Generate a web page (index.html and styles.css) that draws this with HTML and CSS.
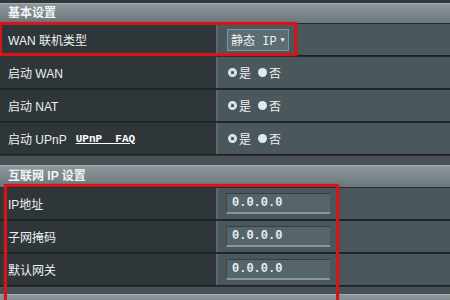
FILE: index.html
```html
<!DOCTYPE html>
<html lang="zh-CN">
<head>
  <meta charset="UTF-8">
  <title>WAN 设置</title>
  <link rel="stylesheet" href="styles.css">
</head>
<body>
  <div class="panel">
    <div class="top-strip"></div>

    <!-- 基本设置 -->
    <div class="section-head">基本设置</div>
    <div class="row">
      <div class="label">WAN 联机类型</div>
      <div class="value">
        <div class="select"><span>静态 IP</span><span class="caret">▼</span></div>
      </div>
    </div>
    <div class="row">
      <div class="label">启动 WAN</div>
      <div class="value radios">
        <span class="radio on"></span>是 <span class="radio"></span>否
      </div>
    </div>
    <div class="row">
      <div class="label">启动 NAT</div>
      <div class="value radios">
        <span class="radio on"></span>是 <span class="radio"></span>否
      </div>
    </div>
    <div class="row">
      <div class="label">启动 UPnP <a class="faq" href="#">UPnP&nbsp;&nbsp;FAQ</a></div>
      <div class="value radios">
        <span class="radio on"></span>是 <span class="radio"></span>否
      </div>
    </div>
    <div class="gap"></div>

    <!-- 互联网 IP 设置 -->
    <div class="section-head tall">互联网 IP 设置</div>
    <div class="row">
      <div class="label">IP地址</div>
      <div class="value"><div class="input">0.0.0.0</div></div>
    </div>
    <div class="row">
      <div class="label">子网掩码</div>
      <div class="value"><div class="input">0.0.0.0</div></div>
    </div>
    <div class="row">
      <div class="label">默认网关</div>
      <div class="value"><div class="input">0.0.0.0</div></div>
    </div>
    <div class="gap short"></div>
    <div class="section-head"></div>

    <!-- red annotation boxes -->
    <div class="mark mark-wan"></div>
    <div class="mark mark-ip"></div>
  </div>
</body>
</html>
```

FILE: styles.css
```css
body {
  margin: 0;
  background: #3a4144;
  font-family: "Liberation Sans", "Noto Sans CJK SC", sans-serif;
  font-size: 12px;
  color: #eef0f0;
  overflow: hidden;
}
.panel {
  position: relative;
  width: 450px;
  height: 300px;
  overflow: hidden;
}
.top-strip {
  height: 3px;
  background: #30373a;
}
.section-head {
  height: 19px;
  line-height: 19px;
  padding-left: 8px;
  background: linear-gradient(#8d989c, #6c777b);
  border-top: 1px solid #a3adb0;
  color: #f2f4f4;
  font-weight: bold;
}
.section-head.tall {
  height: 21px;
  line-height: 21px;
}
.row {
  display: grid;
  grid-template-columns: 218px 1fr;
  height: 31px;
  border-top: 1px solid #252b2d;
  border-bottom: 1px solid #1c2123;
}
.label {
  background: #2e3639;
  border-right: 2px solid #5d686c;
  padding-left: 8px;
  display: flex;
  align-items: center;
  gap: 9px;
}
.value {
  background: #4a575c;
  display: flex;
  align-items: center;
  padding-left: 8px;
}
.faq {
  color: #ffffff;
  font-family: "Liberation Mono", "DejaVu Sans Mono", monospace;
  font-weight: bold;
  font-size: 11px;
  text-decoration: underline;
}
.select {
  display: flex;
  align-items: center;
  gap: 4px;
  width: 62px;
  height: 22px;
  box-sizing: border-box;
  margin-left: 1px;
  background: #5c6c73;
  border: 1px solid #7f95a0;
  font-family: "Liberation Mono", "Noto Sans CJK SC", monospace;
  font-size: 12px;
  padding-left: 3px;
  white-space: nowrap;
}
.caret {
  font-size: 7px;
}
.radios {
  font-size: 12px;
}
.radio {
  display: inline-block;
  width: 9px;
  height: 9px;
  margin: 0 2px 0 7px;
  border-radius: 50%;
  background: #e4e8e8;
  box-sizing: border-box;
}
.radio.on {
  margin-left: 2px;
  border: 2px solid #e4e8e8;
  background: #3a4447;
  box-shadow: inset 0 0 0 1px #e4e8e8;
}
.input {
  width: 104px;
  height: 21px;
  box-sizing: border-box;
  background: #56656a;
  border-top: 1px solid #34403f;
  border-left: 1px solid #3c4749;
  border-bottom: 2px solid #8797a0;
  font-family: "Liberation Mono", "DejaVu Sans Mono", monospace;
  font-size: 12px;
  font-weight: bold;
  line-height: 18px;
  padding-left: 5px;
  color: #e8eef0;
}
.gap {
  height: 9px;
  background: #4a5154;
  border-top: 1px solid #2a3032;
}
.gap.short {
  height: 7px;
}
.mark {
  position: absolute;
  border: 3px solid #d2171a;
  box-shadow: 0 0 2px rgba(210, 23, 26, 0.6);
}
.mark-wan {
  left: -1px;
  top: 22px;
  width: 292px;
  height: 28px;
}
.mark-ip {
  left: 4px;
  top: 184px;
  width: 329px;
  height: 130px;
}
```
